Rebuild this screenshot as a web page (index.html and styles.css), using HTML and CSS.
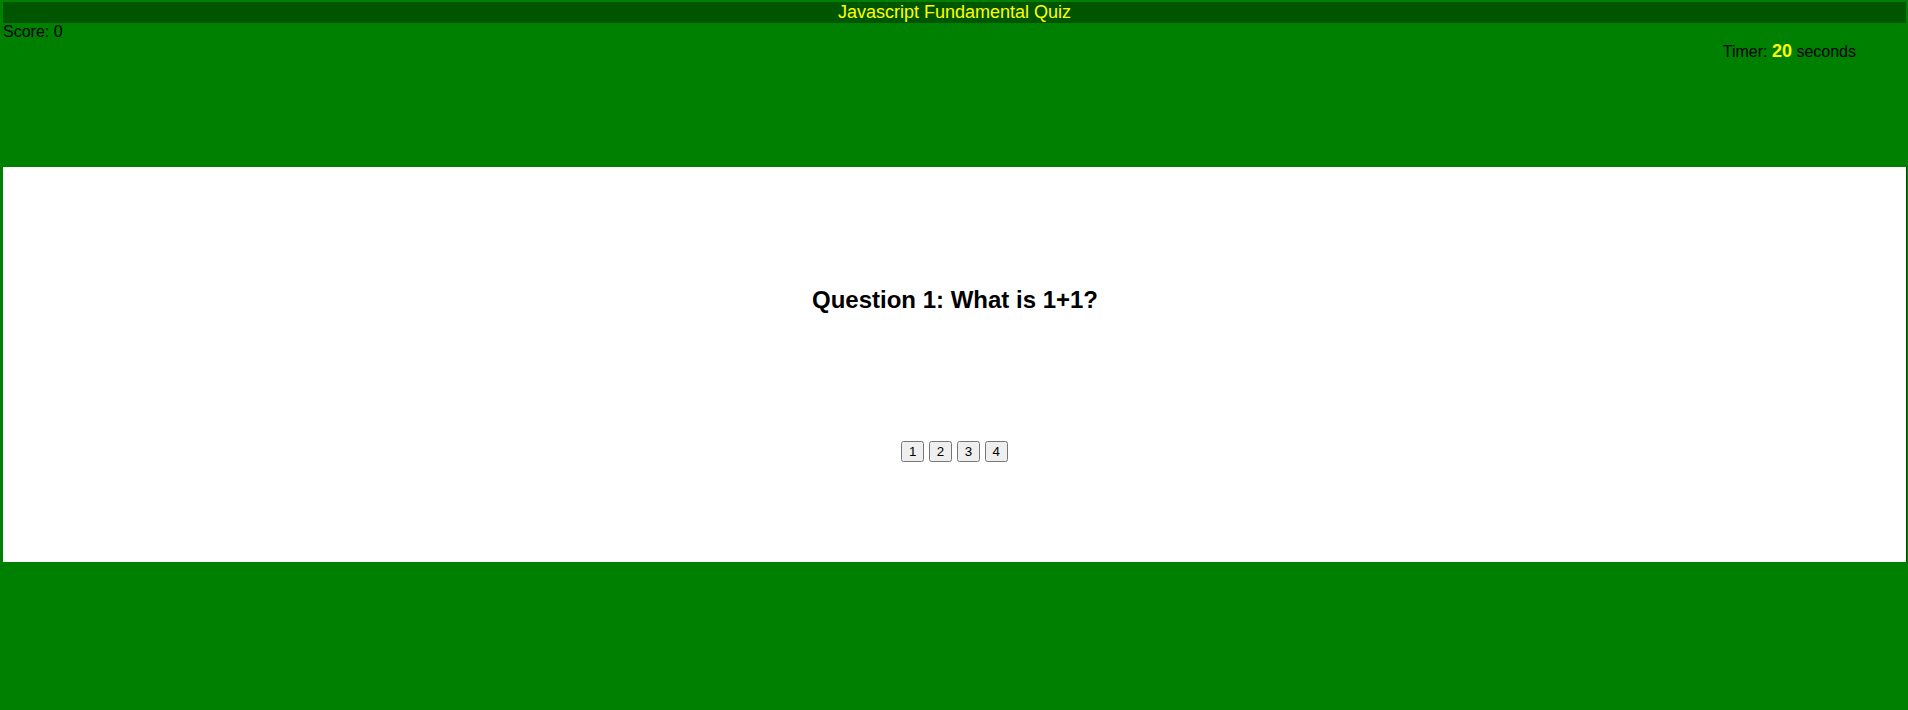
FILE: index.html
```html
<!DOCTYPE html>
<html lang="en">
<head>
<meta charset="utf-8">
<title>Javascript Fundamental Quiz</title>
<link rel="stylesheet" href="styles.css">
</head>
<body>
<div class="page">
  <header class="title-bar">Javascript Fundamental Quiz</header>
  <div class="score">Score: 0</div>
  <div class="timer">Timer: <span class="timer-value">20</span> seconds</div>
  <main class="quiz-card">
    <h2 class="question">Question 1: What is 1+1?</h2>
    <div class="answers">
      <button class="answer">1</button>
      <button class="answer">2</button>
      <button class="answer">3</button>
      <button class="answer">4</button>
    </div>
  </main>
</div>
</body>
</html>
```
FILE: styles.css
```css
html, body {
  margin: 0;
  padding: 0;
  height: 100%;
}
body {
  background: #008000;
  font-family: "Liberation Sans", Arial, sans-serif;
  font-size: 16px;
  color: #000;
}
.page {
  display: flex;
  flex-direction: column;
  padding: 2px 1px 0 3px;
}
.title-bar {
  background: #005500;
  color: #ffff00;
  font-size: 18px;
  text-align: center;
  height: 21px;
  line-height: 21px;
  margin-right: 1px;
}
.score {
  height: 18px;
  line-height: 18px;
}
.timer {
  text-align: right;
  padding-right: 51px;
  height: 21px;
}
.timer-value {
  color: #ffff00;
  font-size: 18px;
  font-weight: bold;
}
.quiz-card {
  margin-top: 105px;
  background: #fff;
  height: 395px;
  border-right: 1px solid #004a00;
  display: flex;
  flex-direction: column;
  align-items: center;
}
.question {
  margin: 119px 0 0 1px;
  font-size: 24px;
  font-weight: bold;
}
.answers {
  margin-top: 127px;
}
.answer {
  font-family: "Liberation Sans", Arial, sans-serif;
  font-size: 13.333px;
}
```
